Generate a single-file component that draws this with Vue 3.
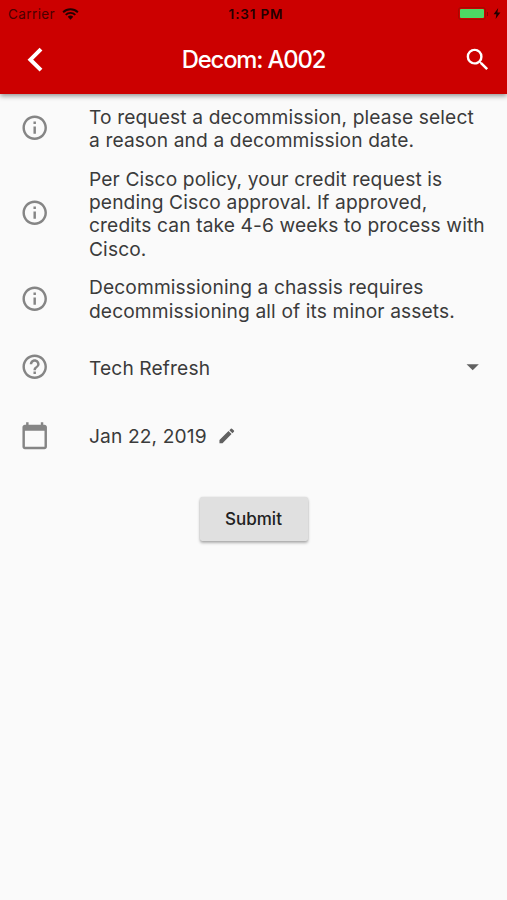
<template>
  <div class="screen">
    <header class="app-bar">
      <div class="status-bar">
        <div class="status-left">
          <span class="carrier">Carrier</span>
          <svg class="wifi" viewBox="0 0 18 13">
            <path d="M1 4.6a11.4 11.4 0 0 1 16 0" />
            <path d="M3.8 7.4a7.5 7.5 0 0 1 10.4 0" />
            <path class="wifi-dot" d="M9 12.6 6 9.6a4.3 4.3 0 0 1 6 0z" />
          </svg>
        </div>
        <span class="clock">1:31 PM</span>
        <div class="status-right">
          <div class="battery"><div class="battery-level"></div></div>
          <div class="battery-cap"></div>
          <svg class="bolt" viewBox="0 0 8 12"><path d="M5.3 0 .3 6.9h3L2.5 12l5.2-7.2H4.4z" /></svg>
        </div>
      </div>
      <div class="toolbar">
        <svg class="back" viewBox="0 0 16 26"><path d="M14 2.2 3.4 12.7 14 23.2" /></svg>
        <h1 class="title">Decom: A002</h1>
        <svg class="search" viewBox="0 0 24 24"><path :d="icons.search" /></svg>
      </div>
    </header>

    <main class="content">
      <div v-for="note in notes" :key="note[0]" class="row row--note">
        <svg class="lead" viewBox="0 0 24 24"><path :d="icons.info" /></svg>
        <p class="text">
          <span v-for="line in note" :key="line" class="line">{{ line }}</span>
        </p>
      </div>

      <div class="row row--field row--reason">
        <svg class="lead" viewBox="0 0 24 24"><path :d="icons.help" /></svg>
        <span class="text">Tech Refresh</span>
        <svg class="caret" viewBox="0 0 24 24"><path d="M7 10l5 5 5-5z" /></svg>
      </div>

      <div class="row row--field">
        <svg class="lead" viewBox="0 0 24 24"><path :d="icons.calendar" /></svg>
        <span class="text">Jan 22, 2019</span>
        <svg class="pencil" viewBox="0 0 24 24"><path :d="icons.edit" /></svg>
      </div>

      <button class="submit" type="button">Submit</button>
    </main>
  </div>
</template>

<script setup>
const notes = [
  ['To request a decommission, please select', 'a reason and a decommission date.'],
  [
    'Per Cisco policy, your credit request is',
    'pending Cisco approval. If approved,',
    'credits can take 4-6 weeks to process with',
    'Cisco.'
  ],
  ['Decommissioning a chassis requires', 'decommissioning all of its minor assets.']
];

const icons = {
  search: 'M15.5 14h-.79l-.28-.27A6.47 6.47 0 0 0 16 9.5 6.5 6.5 0 1 0 9.5 16c1.61 0 3.09-.59 4.23-1.57l.27.28v.79l5 4.99L20.49 19l-4.99-5zm-6 0C7.01 14 5 11.99 5 9.5S7.01 5 9.5 5 14 7.01 14 9.5 11.99 14 9.5 14z',
  info: 'M11 17h2v-6h-2v6zm1-15C6.48 2 2 6.48 2 12s4.48 10 10 10 10-4.48 10-10S17.52 2 12 2zm0 18c-4.41 0-8-3.59-8-8s3.59-8 8-8 8 3.59 8 8-3.59 8-8 8zM11 9h2V7h-2v2z',
  help: 'M11 18h2v-2h-2v2zm1-16C6.48 2 2 6.48 2 12s4.48 10 10 10 10-4.48 10-10S17.52 2 12 2zm0 18c-4.41 0-8-3.59-8-8s3.59-8 8-8 8 3.59 8 8-3.59 8-8 8zm0-14c-2.21 0-4 1.79-4 4h2c0-1.1.9-2 2-2s2 .9 2 2c0 2-3 1.75-3 5h2c0-2.25 3-2.5 3-5 0-2.21-1.79-4-4-4z',
  calendar: 'M20 3h-1V1h-2v2H7V1H5v2H4c-1.1 0-2 .9-2 2v16c0 1.1.9 2 2 2h16c1.1 0 2-.9 2-2V5c0-1.1-.9-2-2-2zm0 18H4V8h16v13z',
  edit: 'M3 17.25V21h3.75L17.81 9.94l-3.75-3.75L3 17.25zM20.71 7.04a.996.996 0 0 0 0-1.41l-2.34-2.34a.996.996 0 0 0-1.41 0l-1.83 1.83 3.75 3.75 1.83-1.83z'
};
</script>

<style>
body {
  margin: 0;
  background: #fafafa;
}
</style>

<style scoped>
.screen {
  display: flex;
  flex-direction: column;
  height: 900px;
  overflow: hidden;
  background: #fafafa;
  color: #3b3b3b;
  font-family: Inter, Roboto, sans-serif;
}

.app-bar {
  flex: none;
  height: 94px;
  background: #cc0000;
  box-shadow: 0 2px 5px rgba(0, 0, 0, 0.42);
  z-index: 1;
}

/* Status bar */
.status-bar {
  display: grid;
  grid-template-columns: 1fr auto 1fr;
  align-items: center;
  height: 27px;
  padding: 0 6px 0 8px;
  box-sizing: border-box;
  color: #230000;
  font-size: 13.5px;
}

.status-left,
.status-right {
  display: flex;
  align-items: center;
}

.carrier {
  color: #4b0000;
  letter-spacing: 0.4px;
}

.wifi {
  width: 17px;
  height: 12px;
  margin-left: 7px;
  fill: none;
  stroke: #230000;
  stroke-width: 2.1;
}

.wifi-dot {
  fill: #230000;
  stroke: none;
}

.clock {
  padding-left: 3px;
  font-weight: 600;
  font-size: 13.5px;
  letter-spacing: 0.85px;
}

.status-right {
  justify-content: flex-end;
}

.battery {
  width: 28px;
  height: 13px;
  padding: 1px;
  box-sizing: border-box;
  border: 1px solid #a30b00;
  border-radius: 3px;
}

.battery-level {
  height: 100%;
  border-radius: 1px;
  background: #4cd964;
}

.battery-cap {
  width: 1px;
  height: 4px;
  margin-left: 1px;
  background: #8d0000;
}

.bolt {
  width: 8px;
  height: 11px;
  margin-left: 5px;
  fill: #230000;
}

/* Toolbar */
.toolbar {
  display: grid;
  grid-template-columns: 1fr auto 1fr;
  align-items: center;
  height: 65px;
  padding: 0 15px;
}

.back {
  width: 16px;
  height: 26px;
  margin-left: 12px;
  fill: none;
  stroke: #ffffff;
  stroke-width: 4;
}

.title {
  margin: 0;
  color: #ffffff;
  font-size: 23.8px;
  font-weight: 500;
  letter-spacing: -1.15px;
}

.search {
  justify-self: end;
  width: 29.4px;
  height: 29.4px;
  fill: #ffffff;
}

/* Rows */
.content {
  display: flex;
  flex-direction: column;
  padding-top: 3px;
}

.row {
  display: flex;
  align-items: center;
  padding: 0 19.6px 0 20px;
}

.row--note {
  padding-top: 6.6px;
  padding-bottom: 6.6px;
}

.row--field {
  height: 68.6px;
}

.row--reason {
  margin-top: 3.4px;
}

.lead {
  flex: none;
  width: 29.4px;
  height: 29.4px;
  margin-right: 39.6px;
  fill: #858585;
}

.text {
  margin: 0;
  padding-top: 2.4px;
  font-size: 19.2px;
  line-height: 23.2px;
  letter-spacing: 0.12px;
  white-space: nowrap;
}

.line {
  display: block;
}

.caret {
  width: 29.4px;
  height: 29.4px;
  margin-left: auto;
  fill: #616161;
}

.pencil {
  width: 19.6px;
  height: 19.6px;
  margin-left: 10px;
  fill: #616161;
}

/* Raised button */
.submit {
  align-self: center;
  width: 108px;
  height: 44px;
  margin: 27px 0 0;
  padding: 0;
  border: 0;
  border-radius: 2.5px;
  background: #e0e0e0;
  box-shadow: 0 2px 3px rgba(0, 0, 0, 0.3), 0 0 2px rgba(0, 0, 0, 0.12);
  color: #212121;
  font-family: inherit;
  font-size: 17px;
  font-weight: 500;
}
</style>
